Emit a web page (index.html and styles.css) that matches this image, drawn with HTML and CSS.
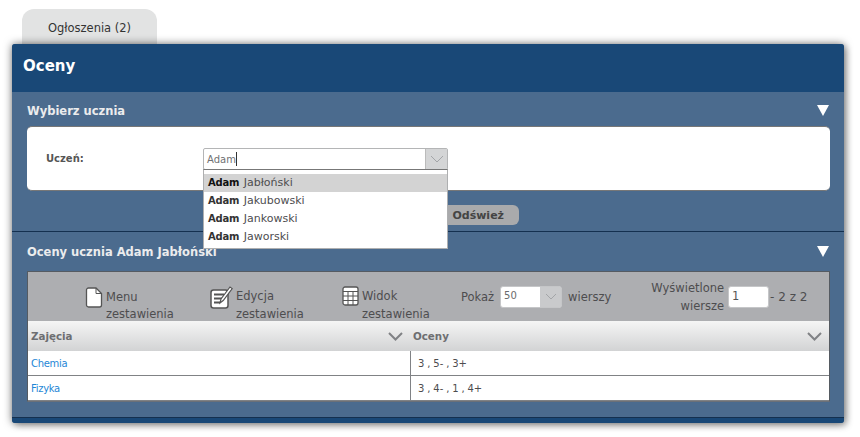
FILE: index.html
```html
<!DOCTYPE html>
<html lang="pl">
<head>
    <meta charset="UTF-8">
    <title>Oceny</title>
    <link rel="stylesheet" href="styles.css">
</head>
<body>
    <div class="tabs">
        <div class="tab">Ogłoszenia (2)</div>
    </div>
    <div class="panel">
        <div class="panel-title">Oceny</div>

        <div class="section first">
            <div class="section-head">
                <span>Wybierz ucznia</span>
                <i class="arrow"></i>
            </div>
            <div class="form-box">
                <label class="form-label">Uczeń:</label>
                <div class="combo">
                    <span class="combo-value">Adam</span><span class="caret"></span>
                    <span class="combo-btn">
                        <svg width="14" height="8" viewBox="0 0 14 8"><path d="M1 1l6 6 6-6" fill="none" stroke="#a3a5a8" stroke-width="1"/></svg>
                    </span>
                    <ul class="combo-list">
                        <li class="active"><b>Adam</b> Jabłoński</li>
                        <li><b>Adam</b> Jakubowski</li>
                        <li><b>Adam</b> Jankowski</li>
                        <li><b>Adam</b> Jaworski</li>
                    </ul>
                </div>
            </div>
            <div class="actions">
                <button class="refresh">Odśwież</button>
            </div>
        </div>

        <div class="section second">
            <div class="section-head">
                <span>Oceny ucznia Adam Jabłoński</span>
                <i class="arrow"></i>
            </div>
            <div class="report">
                <div class="toolbar">
                    <div class="tool tool-menu">
                        <svg width="18" height="21" viewBox="0 0 18 21"><path d="M1.500 3a2 2 0 0 1 2-2h7.500l5.500 5.500v11.500a2 2 0 0 1-2 2h-11a2 2 0 0 1-2-2z" fill="#fff" stroke="#555" stroke-width="1.300"/><path d="M11 1v5.500h5.500" fill="none" stroke="#555" stroke-width="1"/></svg>
                        <span>Menu<br>zestawienia</span>
                    </div>
                    <div class="tool tool-edit">
                        <svg width="23" height="23" viewBox="0 0 23 23"><rect x="1" y="4" width="17" height="18" rx="2.500" fill="#fff" stroke="#555" stroke-width="1.500"/><path d="M4 8.500h10M4 12.500h8M4 16.500h6" stroke="#555" stroke-width="1.800"/><path d="M10 17l1-4 9-12 2.200 1.600-9 12z" fill="#fff" stroke="#555" stroke-width="1.200"/></svg>
                        <span>Edycja<br>zestawienia</span>
                    </div>
                    <div class="tool tool-view">
                        <svg width="17" height="20" viewBox="0 0 17 20"><rect x="1" y="1" width="15" height="18" rx="2" fill="#fff" stroke="#555" stroke-width="1.300"/><path d="M1 5.500h15M1 10h15M1 14.500h15M6 5.500v13.500M11 5.500v13.500" stroke="#555" stroke-width="1"/></svg>
                        <span>Widok<br>zestawienia</span>
                    </div>
                    <div class="pager-show">
                        <span>Pokaż</span>
                        <div class="rows-select">
                            <span class="rows-value">50</span>
                            <span class="rows-btn">
                                <svg width="12" height="7" viewBox="0 0 12 7"><path d="M1 1l5 5 5-5" fill="none" stroke="#a3a5a8" stroke-width="1"/></svg>
                            </span>
                        </div>
                        <span>wierszy</span>
                    </div>
                    <div class="pager-range">
                        <span class="range-label">Wyświetlone<br>wiersze</span>
                        <span class="range-input">1</span>
                        <span class="range-total">- 2 z 2</span>
                    </div>
                </div>
                <table class="grades">
                    <thead>
                        <tr>
                            <th class="col-subject">
                                <div class="th-inner">Zajęcia <svg width="15" height="9" viewBox="0 0 15 9"><path d="M1 1l6.500 6.500 6.500-6.500" fill="none" stroke="#808285" stroke-width="2"/></svg></div>
                            </th>
                            <th>
                                <div class="th-inner">Oceny <svg width="15" height="9" viewBox="0 0 15 9"><path d="M1 1l6.500 6.500 6.500-6.500" fill="none" stroke="#808285" stroke-width="2"/></svg></div>
                            </th>
                        </tr>
                    </thead>
                    <tbody>
                        <tr>
                            <td><a href="#">Chemia</a></td>
                            <td class="marks">3 , 5- , 3+</td>
                        </tr>
                        <tr>
                            <td><a href="#">Fizyka</a></td>
                            <td class="marks">3 , 4- , 1 , 4+</td>
                        </tr>
                    </tbody>
                </table>
            </div>
        </div>
        <div class="panel-foot"></div>
    </div>
</body>
</html>
```

FILE: styles.css
```css
html, body {
    height: 100%;
}
body {
    margin: 0;
    padding: 9px 16px 0 12px;
    box-sizing: border-box;
    background-color: white;
    overflow: hidden;
    font-family: "DejaVu Sans", sans-serif;
    font-size: 11px;
    color: #4d4d4f;
}
.tabs {
    display: flex;
    height: 35px;
    padding-left: 10px;
}
.tab {
    width: 135px;
    height: 35px;
    box-sizing: border-box;
    padding-top: 12px;
    text-align: center;
    font-size: 11.5px;
    color: #333;
    background-color: #e2e3e3;
    border-radius: 12px 12px 0 0;
}
.panel {
    position: relative;
    width: 832px;
    background-color: #4b6b8e;
    border-radius: 3px;
    box-shadow: 0 0 8px rgba(0, 0, 0, 0.55), 3px 3px 6px rgba(0, 0, 0, 0.2);
}
.panel-title {
    height: 48px;
    box-sizing: border-box;
    padding: 13px 11px 0;
    background-color: #194877;
    border-radius: 3px 3px 0 0;
    font-size: 15px;
    font-weight: bold;
    color: white;
}
.section {
    padding: 0 14px 0 15px;
}
.section.first {
    height: 140px;
    box-sizing: border-box;
    border-bottom: 1px solid #14304f;
}
.section.second {
    height: 186px;
    box-sizing: border-box;
    border-bottom: 1px solid #14304f;
}
.section-head {
    display: flex;
    justify-content: space-between;
    align-items: center;
    height: 34px;
    box-sizing: border-box;
    padding: 3px 1px 0 0;
    font-size: 11.5px;
    font-weight: bold;
    color: #ebeced;
}
.second .section-head {
    height: 39px;
    padding-top: 0;
}
.arrow {
    width: 0;
    height: 0;
    border-left: 6px solid transparent;
    border-right: 6px solid transparent;
    border-top: 11px solid white;
}
.form-box {
    display: flex;
    height: 65px;
    box-sizing: border-box;
    padding: 21px 0 0 19px;
    background-color: white;
    border-bottom: 1px solid #777;
    border-top: 1px solid #777;
    border-radius: 5px;
}
.form-label {
    width: 157px;
    padding-top: 5px;
    font-size: 10px;
    font-weight: bold;
    color: #555;
}
.combo {
    position: relative;
    display: flex;
    align-items: center;
    width: 245px;
    height: 22px;
    box-sizing: border-box;
    padding-left: 3px;
    border: 1px solid #b4b5b6;
    border-radius: 2px;
    background-color: white;
    font-size: 10px;
    color: #707173;
}
.caret {
    width: 1px;
    height: 14px;
    background-color: #333;
}
.combo-btn {
    position: absolute;
    top: 0;
    right: 0;
    display: flex;
    align-items: center;
    justify-content: center;
    width: 21px;
    height: 20px;
    background-color: #d4d5d6;
    border-left: 1px solid #bbb;
}
.combo-list {
    position: absolute;
    z-index: 5;
    top: 20px;
    left: -1px;
    width: 245px;
    height: 80px;
    box-sizing: border-box;
    margin: 0;
    padding: 4px 0 0;
    list-style: none;
    background-color: white;
    border: 1px solid #aeafb0;
    border-top-color: #777;
    font-size: 11px;
    color: #4d4d4f;
}
.combo-list li {
    height: 18px;
    box-sizing: border-box;
    padding: 2px 0 0 4px;
}
.combo-list b {
    font-size: 10px;
    letter-spacing: -0.2px;
    margin-right: 1px;
    color: #333;
}
.combo-list li.active {
    background-color: #d3d3d3;
}
.combo-list li.active b {
    color: #111;
}
.actions {
    display: flex;
    justify-content: flex-end;
    padding: 14px 311px 0 0;
}
.refresh {
    width: 90px;
    height: 20px;
    padding: 0 15px 0 0;
    text-align: right;
    border: none;
    border-radius: 6px;
    background-color: #a9aaac;
    font-family: inherit;
    font-size: 11px;
    font-weight: bold;
    color: #444;
}
.report {
    width: 803px;
    box-sizing: border-box;
    border: 1px solid #555b62;
    border-bottom-color: #6b7078;
    background-color: #adaeb1;
    border-radius: 1px;
}
.toolbar {
    display: flex;
    height: 49px;
    font-size: 11.5px;
    line-height: 18px;
    color: #4d4d4f;
    padding-left: 57px;
}
.tool {
    display: flex;
    gap: 3px;
}
.tool span {
    display: block;
    padding-top: 1px;
}
.tool svg {
    flex: none;
}
.tool-menu {
    width: 125px;
    padding-top: 15px;
}
.tool-menu span {
    padding-top: 2px;
    line-height: 17px;
}
.tool-edit {
    width: 132px;
    padding-top: 14px;
}
.tool-view {
    width: 119px;
    padding-top: 14px;
}
.pager-show {
    display: flex;
    align-items: center;
    gap: 6px;
    height: 21px;
    margin-top: 14px;
}
.rows-select {
    display: flex;
    width: 62px;
    height: 22px;
    box-sizing: border-box;
    border: 1px solid #c5c6c8;
    border-radius: 3px;
    background-color: white;
}
.rows-value {
    flex: 1;
    padding-left: 3px;
    font-size: 10px;
    line-height: 18px;
    color: #6a6b6d;
}
.rows-btn {
    display: flex;
    align-items: center;
    justify-content: center;
    width: 21px;
    background-color: #c9cacc;
}
.pager-range {
    display: flex;
    align-items: flex-start;
    margin-left: 40px;
    padding-top: 7px;
}
.range-label {
    text-align: right;
    line-height: 18px;
    margin-right: 4px;
}
.range-input {
    width: 41px;
    height: 22px;
    box-sizing: border-box;
    margin-top: 7px;
    padding-left: 3px;
    border: 1px solid #c5c6c8;
    border-radius: 3px;
    background-color: white;
    color: #555;
}
.range-total {
    margin: 9px 0 0 1px;
    font-size: 12px;
    white-space: nowrap;
}
.grades {
    width: 801px;
    border-collapse: separate;
    border-spacing: 0;
    table-layout: fixed;
    background-color: white;
}
.grades th {
    height: 30px;
    padding: 0 7px 0 3px;
    box-sizing: border-box;
    text-align: left;
    font-size: 10.3px;
    font-weight: bold;
    color: #6d6e71;
    background: linear-gradient(#f5f5f5, #d2d3d4);
}
.col-subject {
    width: 382px;
}
.th-inner {
    display: flex;
    justify-content: space-between;
    align-items: center;
}
.grades td {
    height: 25px;
    padding: 0 3px;
    box-sizing: border-box;
    border-bottom: 1px solid #808285;
    font-size: 10px;
    color: #4d4d4f;
}
.grades td.marks {
    padding-left: 7px;
    border-left: 1px solid #808285;
    word-spacing: -0.3px;
}
.grades a {
    color: #1f87d6;
    letter-spacing: -0.3px;
    text-decoration: none;
}
.panel-foot {
    height: 5px;
    background-color: #194877;
    border-radius: 0 0 3px 3px;
}
```
